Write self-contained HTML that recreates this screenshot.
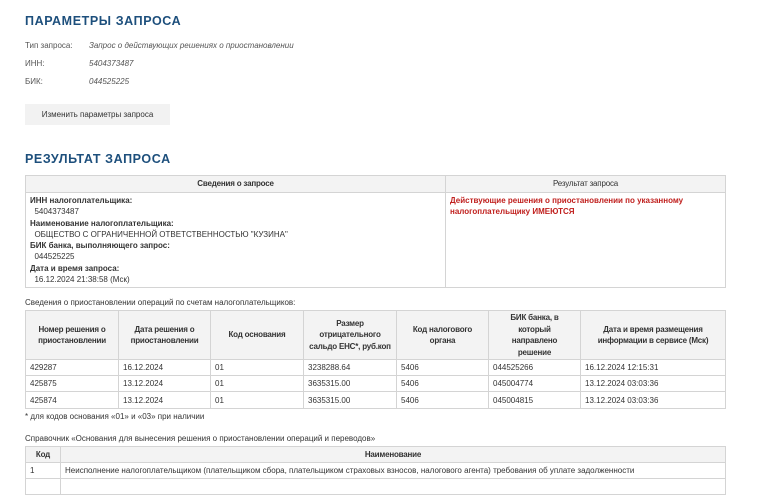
<!DOCTYPE html>
<html><head><meta charset="utf-8"><style>
*{margin:0;padding:0;box-sizing:border-box}
body{width:758px;height:480px;overflow:hidden;background:#fff;font-family:"Liberation Sans",sans-serif;color:#333;font-size:8px;position:relative}
.a{position:absolute;white-space:nowrap}
h2{position:absolute;left:25px;font-size:12.5px;font-weight:bold;color:#1d4f7c;letter-spacing:0.6px}
.lbl{left:25px;color:#555}
.val{left:89px;font-style:italic;color:#555}
.btn{left:25px;top:104px;width:145px;height:21px;background:#f2f2f2;text-align:center;line-height:21px;color:#333}
table{position:absolute;border-collapse:collapse;font-size:8px;color:#333;table-layout:fixed}
td,th{border:1px solid #d4d4d4;padding:0 4px;vertical-align:middle;white-space:nowrap;overflow:hidden}
th{background:#f3f3f3;font-weight:bold;text-align:center;line-height:11.5px;letter-spacing:-0.2px}
.red{color:#c0201e;font-weight:bold}
b{font-weight:bold}
</style></head><body>
<h2 style="top:14px">ПАРАМЕТРЫ ЗАПРОСА</h2>
<div class="a lbl" style="top:41px">Тип запроса:</div><div class="a val" style="top:41px">Запрос о действующих решениях о приостановлении</div>
<div class="a lbl" style="top:59px">ИНН:</div><div class="a val" style="top:59px">5404373487</div>
<div class="a lbl" style="top:77px">БИК:</div><div class="a val" style="top:77px">044525225</div>
<div class="a btn">Изменить параметры запроса</div>
<h2 style="top:152px">РЕЗУЛЬТАТ ЗАПРОСА</h2>
<table style="left:25px;top:175px;width:701px">
<tr style="height:17px"><th style="width:420px">Сведения о запросе</th><th style="font-weight:normal">Результат запроса</th></tr>
<tr style="height:94px"><td style="vertical-align:top;padding:2px 4px;line-height:11.3px"><b>ИНН налогоплательщика:</b><br>&nbsp;&nbsp;5404373487<br><b>Наименование налогоплательщика:</b><br>&nbsp;&nbsp;ОБЩЕСТВО С ОГРАНИЧЕННОЙ ОТВЕТСТВЕННОСТЬЮ "КУЗИНА"<br><b>БИК банка, выполняющего запрос:</b><br>&nbsp;&nbsp;044525225<br><b>Дата и время запроса:</b><br>&nbsp;&nbsp;16.12.2024 21:38:58 (Мск)</td>
<td class="red" style="vertical-align:top;padding:2px 4px;line-height:11.3px">Действующие решения о приостановлении по указанному<br>налогоплательщику ИМЕЮТСЯ</td></tr>
</table>
<div class="a" style="left:25px;top:298px">Сведения о приостановлении операций по счетам налогоплательщиков:</div>
<table style="left:25px;top:310px;width:701px">
<tr style="height:49px"><th style="width:93px">Номер решения о<br>приостановлении</th><th style="width:92px">Дата решения о<br>приостановлении</th><th style="width:93px">Код основания</th><th style="width:93px">Размер<br>отрицательного<br>сальдо ЕНС*, руб.коп</th><th style="width:92px">Код налогового<br>органа</th><th style="width:92px">БИК банка, в<br>который<br>направлено<br>решение</th><th>Дата и время размещения<br>информации в сервисе (Мск)</th></tr>
<tr style="height:16px"><td>429287</td><td>16.12.2024</td><td>01</td><td>3238288.64</td><td>5406</td><td>044525266</td><td>16.12.2024 12:15:31</td></tr>
<tr style="height:16px"><td>425875</td><td>13.12.2024</td><td>01</td><td>3635315.00</td><td>5406</td><td>045004774</td><td>13.12.2024 03:03:36</td></tr>
<tr style="height:17px"><td>425874</td><td>13.12.2024</td><td>01</td><td>3635315.00</td><td>5406</td><td>045004815</td><td>13.12.2024 03:03:36</td></tr>
</table>
<div class="a" style="left:25px;top:412px">* для кодов основания «01» и «03» при наличии</div>
<div class="a" style="left:25px;top:434px">Справочник «Основания для вынесения решения о приостановлении операций и переводов»</div>
<table style="left:25px;top:446px;width:701px">
<tr style="height:16px"><th style="width:35px">Код</th><th>Наименование</th></tr>
<tr style="height:16px"><td>1</td><td>Неисполнение налогоплательщиком (плательщиком сбора, плательщиком страховых взносов, налогового агента) требования об уплате задолженности</td></tr>
<tr style="height:16px"><td>&nbsp;</td><td>&nbsp;</td></tr>
</table>
</body></html>
